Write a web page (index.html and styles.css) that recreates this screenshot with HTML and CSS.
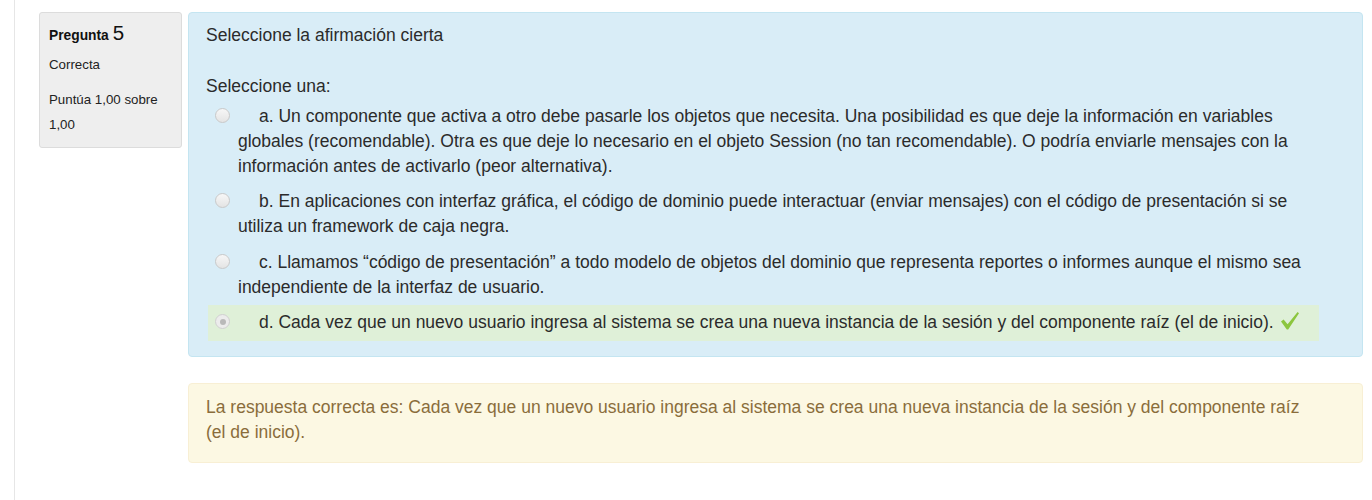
FILE: index.html
```html
<!DOCTYPE html>
<html lang="es">
<head>
<meta charset="utf-8">
<title>Pregunta 5</title>
<link rel="stylesheet" href="styles.css">
</head>
<body>
<div class="page">
  <div class="que">
    <div class="info">
      <h3 class="no">Pregunta <span class="qno">5</span></h3>
      <div class="state">Correcta</div>
      <div class="grade">Puntúa 1,00 sobre 1,00</div>
    </div>
    <div class="content">
      <div class="formulation">
        <div class="qtext">Seleccione la afirmación cierta</div>
        <div class="prompt">Seleccione una:</div>
        <div class="answer">
          <div class="r"><span class="radio"></span>a. Un componente que activa a otro debe pasarle los objetos que necesita. Una posibilidad es que deje la información en variables globales (recomendable). Otra es que deje lo necesario en el objeto Session (no tan recomendable). O podría enviarle mensajes con la información antes de activarlo (peor alternativa).</div>
          <div class="r"><span class="radio"></span>b. En aplicaciones con interfaz gráfica, el código de dominio puede interactuar (enviar mensajes) con el código de presentación si se utiliza un framework de caja negra.</div>
          <div class="r"><span class="radio"></span>c. Llamamos “código de presentación” a todo modelo de objetos del dominio que representa reportes o informes aunque el mismo sea independiente de la interfaz de usuario.</div>
          <div class="r correct"><span class="radio checked"></span>d. Cada vez que un nuevo usuario ingresa al sistema se crea una nueva instancia de la sesión y del componente raíz (el de inicio). <svg class="tick" width="20" height="20" viewBox="0 0 20 20"><path d="M1 10.5 L3.6 8.6 L7.6 13.2 L17.6 1 L19 2.2 L8.2 18.6 L6.8 18.6 Z" fill="#8cc63e"/></svg></div>
        </div>
      </div>
      <div class="outcome">La respuesta correcta es: Cada vez que un nuevo usuario ingresa al sistema se crea una nueva instancia de la sesión y del componente raíz (el de inicio).</div>
    </div>
  </div>
</div>
</body>
</html>
```

FILE: styles.css
```css
html, body {
  margin: 0;
  padding: 0;
  background: #fff;
}
body {
  font-family: "Liberation Sans", Arial, sans-serif;
  color: #333;
}
.page {
  margin-left: 14px;
  border-left: 1px solid #e6e6e6;
  min-height: 500px;
  padding: 12px 9px 0 24px;
  box-sizing: border-box;
}
.que {
  display: flex;
  align-items: flex-start;
  gap: 6px;
}
.info {
  flex: 0 0 143px;
  box-sizing: border-box;
  background: #eee;
  border: 1px solid #dcdcdc;
  border-radius: 3px;
  padding: 7px 9px 10px 9px;
  font-size: 13.3px;
  line-height: 25px;
  color: #222;
}
.no {
  margin: 0 0 4px 0;
  font-size: 13.8px;
  font-weight: bold;
  line-height: 25px;
  color: #111;
}
.qno {
  font-size: 20.5px;
  font-weight: normal;
}
.state {
  margin-bottom: 10px;
}
.content {
  flex: 1;
  min-width: 0;
}
.formulation {
  background: #d9edf7;
  border: 1px solid #c4e5f1;
  border-radius: 4px;
  padding: 9.5px 43px 15.5px 17px;
  font-size: 17.5px;
  line-height: 25px;
  color: #2b2b2b;
}
.qtext {
  margin-bottom: 26px;
}
.answer {
  margin-left: 2px;
}
.r {
  padding: 5.25px 0 5.25px 30px;
  text-indent: -30px;
}
.r.correct {
  background: #dff0d8;
}
.radio {
  display: inline-block;
  width: 13px;
  height: 13px;
  border: 1px solid #c9c9c9;
  border-radius: 50%;
  background: linear-gradient(#f7f7f7, #e4e4e4);
  margin: 0 29px 0 7px;
  vertical-align: -1px;
  position: relative;
  box-sizing: content-box;
}
.radio.checked {
  background: #ececec;
  border-color: #d0d0d0;
}
.radio.checked::after {
  content: "";
  position: absolute;
  left: 3.5px;
  top: 3.5px;
  width: 6px;
  height: 6px;
  border-radius: 50%;
  background: #b9b9b9;
}
.tick {
  vertical-align: -3px;
  margin-left: 1px;
}
.outcome {
  margin-top: 26px;
  background: #fcf8e3;
  border: 1px solid #f8efd4;
  border-radius: 4px;
  padding: 10.5px 43px 17.5px 17px;
  font-size: 17.5px;
  line-height: 25px;
  color: #8a6d3b;
}
```
